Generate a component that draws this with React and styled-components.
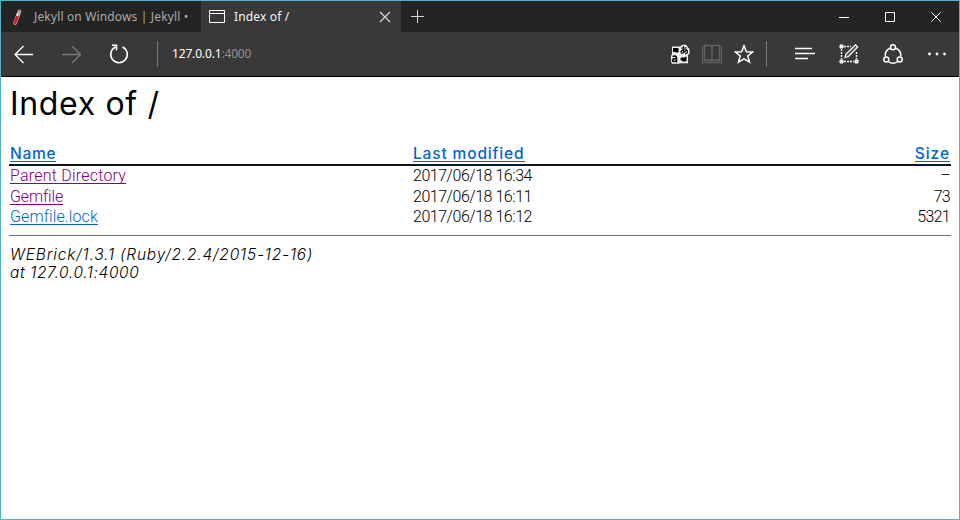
import React from "react";
import styled, { createGlobalStyle } from "styled-components";

const Global = createGlobalStyle`
  * { box-sizing: border-box; }
  body { margin: 0; background: #fff; }
`;

const Window = styled.div`
  width: 960px;
  height: 520px;
  border: 1px solid #50b4c6;
  background: #fff;
  display: flex;
  flex-direction: column;
  overflow: hidden;
  font-family: "Noto Sans", sans-serif;
`;

const TabBar = styled.div`
  height: 31px;
  flex: none;
  display: flex;
  background: #242424;
`;

const Tab = styled.div`
  width: 200px;
  height: 31px;
  display: flex;
  align-items: center;
  padding-left: 8px;
  background: ${(p) => (p.$active ? "#393939" : "#242424")};
  color: ${(p) => (p.$active ? "#f4f4f4" : "#a9a9a9")};
`;

const TabTitle = styled.span`
  flex: 1;
  margin-left: 9px;
  font-size: 12px;
  line-height: 18px;
  white-space: nowrap;
  letter-spacing: 0.15px;
`;

const Glyph = styled.svg`
  display: block;
  flex: none;
  fill: none;
  stroke: ${(p) => p.$color || "#fff"};
  margin-right: ${(p) => p.$gap || 0}px;
`;

const WindowControls = styled.div`
  margin-left: auto;
  display: flex;
`;

const ControlButton = styled.div`
  width: 46px;
  height: 31px;
  display: flex;
  align-items: center;
  justify-content: center;
`;

const NewTabButton = styled(ControlButton)`
  width: 33px;
`;

const Toolbar = styled.div`
  height: 45px;
  flex: none;
  display: flex;
  align-items: center;
  padding-left: 12px;
  padding-right: 13px;
  background: #393939;
  border-bottom: 1px solid #000;
`;

const Divider = styled.div`
  width: 1px;
  height: 26px;
  background: #777;
  margin-right: ${(p) => p.$gap}px;
`;

const AddressField = styled.div`
  flex: 1;
  font-size: 12px;
  line-height: 18px;
  letter-spacing: -0.16px;
  color: #fff;
`;

const Port = styled.span`
  color: #929292;
`;

const Page = styled.main`
  flex: 1;
  padding: 8px 8px 0;
  font-family: Roboto, "Liberation Sans", sans-serif;
  font-weight: 300;
  font-size: 16px;
  color: #000;
`;

const Heading = styled.h1`
  margin: 0 0 21px 1px;
  font-family: Inter, sans-serif;
  font-size: 32px;
  line-height: 38px;
  font-weight: 400;
  letter-spacing: 0.65px;
`;

const Listing = styled.div`
  display: flex;
  flex-direction: column;
`;

const Row = styled.div`
  display: grid;
  grid-template-columns: 403px 1fr 120px;
  height: ${(p) => p.$height || 20}px;
  line-height: 20px;
  padding: 0 1px;
`;

const HeadRow = styled(Row)`
  height: 22px;
  font-family: Inter, sans-serif;
  font-size: 15.5px;
  font-weight: 500;
  border-bottom: 2px solid #151515;
`;

const Cell = styled.div`
  text-align: ${(p) => (p.$right ? "right" : "left")};
  letter-spacing: ${(p) => p.$spacing || "0"};
  white-space: nowrap;
`;

const Link = styled.a`
  display: inline-block;
  height: 18px;
  color: ${(p) => (p.$visited ? "#800080" : "#0066cc")};
  border-bottom: 1px solid currentColor;
`;

const Rule = styled.hr`
  margin: 8px 0 10px;
  border: 0;
  height: 1px;
  background: #6d6d6d;
`;

const Signature = styled.address`
  margin-left: 1px;
  font-family: Inter, sans-serif;
  font-size: 15.5px;
  line-height: 18px;
  font-style: italic;
`;

const Line = styled.div`
  letter-spacing: ${(p) => p.$spacing};
  white-space: nowrap;
`;

const files = [
  { name: "Parent Directory", spacing: "0.22px", visited: true, date: "2017/06/18 16:34", size: "–", height: 21 },
  { name: "Gemfile", spacing: "-0.15px", visited: true, date: "2017/06/18 16:11", size: "73" },
  { name: "Gemfile.lock", spacing: "0.1px", date: "2017/06/18 16:12", size: "5321" },
];

export default function App() {
  return (
    <>
      <Global />
      <Window>
        <TabBar>
          <Tab>
            <Glyph width="16" height="20" viewBox="0 0 16 20" stroke="none">
              <path d="M9 3.5L12 4.6" stroke="#ddd" strokeWidth="2" />
              <path d="M10.3 5L6 16" stroke="#a0a0a0" strokeWidth="4" strokeLinecap="round" />
              <path d="M8.300 10L6 15.500" stroke="#d32028" strokeWidth="3" strokeLinecap="round" />
              <path d="M9.200 6L7.900 9" stroke="#eee" strokeWidth="1.400" />
            </Glyph>
            <TabTitle>Jekyll on Windows | Jekyll •</TabTitle>
          </Tab>
          <Tab $active>
            <Glyph width="16" height="14" viewBox="0 0 16 14">
              <path d="M.5 .5h15v12H.5zM.5 3.5h15" />
            </Glyph>
            <TabTitle>Index of /</TabTitle>
            <Glyph $gap={10} $color="#d5d5d5" width="12" height="12" viewBox="0 0 12 12">
              <path d="M1 1l10 10M11 1L1 11" strokeWidth="1.2" />
            </Glyph>
          </Tab>
          <NewTabButton>
            <Glyph $color="#d5d5d5" width="13" height="13" viewBox="0 0 13 13">
              <path d="M6.5 0v13M0 6.5h13" />
            </Glyph>
          </NewTabButton>
          <WindowControls>
            <ControlButton>
              <Glyph width="10" height="11" viewBox="0 0 10 11"><path d="M0 6.5h10" /></Glyph>
            </ControlButton>
            <ControlButton>
              <Glyph width="10" height="10" viewBox="0 0 10 10"><path d="M.5 .5h9v9h-9z" /></Glyph>
            </ControlButton>
            <ControlButton>
              <Glyph width="10" height="10" viewBox="0 0 10 10"><path d="M.3 .3l9.4 9.4M9.7 .3L.3 9.7" /></Glyph>
            </ControlButton>
          </WindowControls>
        </TabBar>
        <Toolbar>
          <Glyph $gap={28} width="20" height="20" viewBox="0 0 20 20">
            <path d="M20 10.500H2M10.500 2L2 10.500l8.500 8.500" strokeWidth="1.300" />
          </Glyph>
          <Glyph $gap={28} $color="#777" width="20" height="20" viewBox="0 0 20 20">
            <path d="M1 10.500h18.500M11 2L19.500 10.500 11 19" strokeWidth="1.300" />
          </Glyph>
          <Glyph $gap={28} width="20" height="20" viewBox="0 0 20 20">
            <path d="M6.500 2.900A8.300 8.300 0 1 0 13.500 2.900M3 1.200h4.500v5" strokeWidth="1.600" />
          </Glyph>
          <Divider $gap={14} />
          <AddressField>127.0.0.1<Port>:4000</Port></AddressField>
          <Glyph $gap={12} width="20" height="20" viewBox="0 0 20 20">
            <path d="M2 2.500h8L12.500 .8h3.500l3.500 4.500v4l-1.500 2v8H10l-1 .5H2l-1-2V12l1-2z" fill="#f2f2f2" stroke="none" />
            <path d="M3 4h5.500v4.500H6L4.500 7.500 3 8.500zM10 15l2.500-2.500V14l4-1.500V17.500h-4z" fill="#000" stroke="none" />
            <path d="M11 4h6M13.500 2c-.5 3-.5 5 .5 7M16.500 5.500c-1 3-5.500 5-5.500 2.500s6.500-3 6.500-.5-1.500 2-2.500 2.500" stroke="#000" strokeWidth="1.200" />
            <path d="M2.500 12.500c2.500-1 4-.5 4 1.500v4.500M6.500 14.500c-3 0-4 .8-4 2s3 1.500 4-.5" stroke="#000" strokeWidth="1.600" />
          </Glyph>
          <Glyph $gap={12} $color="#626262" width="20" height="20" viewBox="0 0 20 20">
            <path d="M2.500 1.500h5.500q2 0 2 2 0-2 2-2h5.500v14.500h-5.500q-2 0-2 1.500 0-1.500-2-1.500H2.500zM10 3v14M.5 2v16.500h19V2" strokeWidth="1.300" />
          </Glyph>
          <Glyph $gap={12} width="20" height="20" viewBox="0 0 20 20">
            <path d="M10 1.800l2.400 5.900 6.200.3-4.800 4 1.700 6.200L10 14.800l-5.500 3.400 1.700-6.200-4.800-4 6.200-.3z" strokeWidth="1.500" />
          </Glyph>
          <Divider $gap={28} />
          <Glyph $gap={22} width="21" height="20" viewBox="0 0 21 20">
            <path d="M0 4.500h17M0 9.500h20M0 14.500h13" strokeWidth="1.300" />
          </Glyph>
          <Glyph $gap={24} width="21" height="20" viewBox="0 0 21 20">
            <path d="M6 2.500h7M3.500 5v10M6 17.500h10M18.500 8v7" strokeDasharray="2 1" strokeWidth="1.400" />
            <path d="M2 1h3v3H2zM2 16h3v3H2zM17 16h3v3h-3z" fill="#ddd" strokeWidth="1" />
            <path d="M7 13.500l1-3.500L17.500 .8l2.200 2.200L10.500 12.500z" fill="#555" strokeWidth="1.200" />
          </Glyph>
          <Glyph $gap={24} width="20" height="20" viewBox="0 0 20 20">
            <circle cx="10" cy="3.200" r="2.500" strokeWidth="1.500" />
            <circle cx="3.300" cy="15.500" r="2.500" strokeWidth="1.500" />
            <circle cx="16.700" cy="15.500" r="2.500" strokeWidth="1.500" />
            <path d="M7.200 4.200C3.500 5.500 2 9 2.300 12.500M12.800 4.200c3.700 1.300 5.200 4.800 4.900 8.300M5.300 17.500c3 2.200 6.400 2.200 9.400 0" strokeWidth="1.500" />
          </Glyph>
          <Glyph width="19" height="20" viewBox="0 0 19 20">
            <g fill="#fff" stroke="none">
              <circle cx="2.500" cy="10" r="1.400" /><circle cx="10" cy="10" r="1.400" /><circle cx="17.500" cy="10" r="1.400" />
            </g>
          </Glyph>
        </Toolbar>
        <Page>
          <Heading>Index of /</Heading>
          <Listing>
            <HeadRow>
              <Cell $spacing="0.7px"><Link>Name</Link></Cell>
              <Cell $spacing="0.85px"><Link>Last modified</Link></Cell>
              <Cell $right $spacing="0.95px"><Link>Size</Link></Cell>
            </HeadRow>
            {files.map((f) => (
              <Row key={f.name} $height={f.height}>
                <Cell $spacing={f.spacing}><Link $visited={f.visited}>{f.name}</Link></Cell>
                <Cell $spacing="-0.47px">{f.date}</Cell>
                <Cell $right $spacing="-0.7px">{f.size}</Cell>
              </Row>
            ))}
          </Listing>
          <Rule />
          <Signature>
            <Line $spacing="0.82px">WEBrick/1.3.1 (Ruby/2.2.4/2015-12-16)</Line>
            <Line $spacing="0.62px">at 127.0.0.1:4000</Line>
          </Signature>
        </Page>
      </Window>
    </>
  );
}
